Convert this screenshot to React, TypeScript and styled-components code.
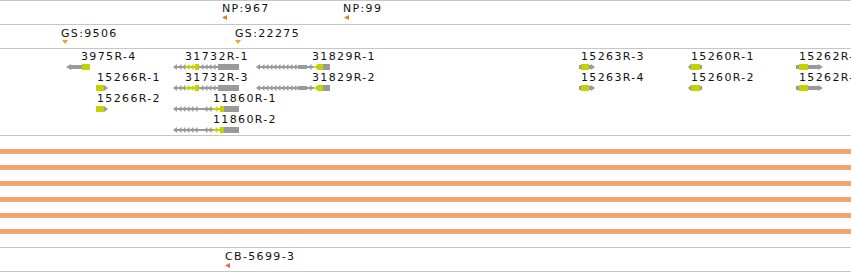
import React from "react";
import styled, { createGlobalStyle } from "styled-components";

const GRAY = "#9a9a9a";
const YEL = "#c4d200";

const GlobalStyle = createGlobalStyle`
  html, body {
    margin: 0;
    padding: 0;
    background: #fff;
    overflow: hidden;
  }
  body {
    font-family: "DejaVu Sans", Verdana, sans-serif;
  }
`;

const Browser = styled.div`
  width: 851px;
  border-top: 1px solid #c6c6c6;
`;

const Track = styled.div<{ $h: number }>`
  position: relative;
  height: ${(p) => p.$h}px;
  border-bottom: 1px solid #c6c6c6;
  overflow: hidden;
`;

// features sit at their genomic coordinate, so they are placed on the track canvas
const Label = styled.span<{ $x: number; $y: number }>`
  position: absolute;
  left: ${(p) => p.$x}px;
  top: ${(p) => p.$y}px;
  font-family: "DejaVu Sans", Verdana, sans-serif;
  font-size: 11px;
  line-height: 13px;
  letter-spacing: 1.35px;
  color: #111;
  white-space: nowrap;
`;

const Art = styled.svg`
  position: absolute;
  left: 0;
  top: 0;
  width: 851px;
  height: 100%;
`;

const BandStack = styled.div`
  display: flex;
  flex-direction: column;
  gap: 11px;
  padding-top: 13px;
`;

const Band = styled.div`
  height: 5px;
  background: #f2a470;
`;

type Part = [kind: "box" | "utr" | "line" | "tipL" | "tipR" | "intron", a: number, b: number, color: string];

const Gene = ({ parts, cy, dir }: { parts: Part[]; cy: number; dir: -1 | 1 }) => (
  <g>
    {parts.map(([kind, a, b, c], i) => {
      if (kind === "box") return <rect key={i} x={a} y={cy - 3} width={b - a} height={6} fill={c} />;
      if (kind === "utr") return <rect key={i} x={a} y={cy - 2} width={b - a} height={4} fill={c} />;
      if (kind === "line") return <rect key={i} x={a} y={cy - 1} width={b - a} height={2} fill={c} />;
      if (kind === "tipL")
        return <polygon key={i} points={`${a},${cy} ${b},${cy - 3} ${b},${cy + 3}`} fill={c} />;
      if (kind === "tipR")
        return <polygon key={i} points={`${b},${cy} ${a},${cy - 3} ${a},${cy + 3}`} fill={c} />;
      const marks = [];
      for (let x = a + 1; x + 3 <= b; x += 4) {
        marks.push(
          dir < 0 ? (
            <polygon key={x} points={`${x},${cy} ${x + 3.5},${cy - 3} ${x + 3.5},${cy + 3}`} fill={c} />
          ) : (
            <polygon key={x} points={`${x + 3.5},${cy} ${x},${cy - 3} ${x},${cy + 3}`} fill={c} />
          )
        );
      }
      return (
        <g key={i}>
          <rect x={a} y={cy - 1} width={b - a} height={2} fill={c} />
          {marks}
        </g>
      );
    })}
  </g>
);

const g3975: Part[] = [
  ["tipL", 66, 71, GRAY],
  ["utr", 71, 82, GRAY],
  ["box", 82, 90, YEL],
];
const g15266: Part[] = [
  ["box", 96, 104, YEL],
  ["tipR", 104, 108, GRAY],
];
const g31732: Part[] = [
  ["tipL", 173, 177, GRAY],
  ["intron", 177, 185, GRAY],
  ["intron", 185, 195, YEL],
  ["box", 195, 199, YEL],
  ["intron", 199, 218, GRAY],
  ["box", 218, 239, GRAY],
];
const g11860: Part[] = [
  ["tipL", 173, 177, GRAY],
  ["intron", 177, 197, GRAY],
  ["line", 197, 203, GRAY],
  ["intron", 203, 213, GRAY],
  ["intron", 213, 220, YEL],
  ["box", 220, 224, YEL],
  ["box", 224, 239, GRAY],
];
const g31829: Part[] = [
  ["tipL", 256, 260, GRAY],
  ["intron", 260, 298, GRAY],
  ["utr", 298, 307, GRAY],
  ["intron", 307, 314, GRAY],
  ["tipL", 314, 318, YEL],
  ["box", 318, 323, YEL],
  ["box", 323, 330, GRAY],
];
const g15263: Part[] = [
  ["utr", 579, 581, GRAY],
  ["box", 581, 589, YEL],
  ["utr", 589, 591, GRAY],
  ["tipR", 591, 595, GRAY],
];
const g15260: Part[] = [
  ["tipL", 688, 691, GRAY],
  ["box", 691, 700, YEL],
  ["utr", 700, 702, GRAY],
];
const g15262: Part[] = [
  ["utr", 796, 799, GRAY],
  ["box", 799, 808, YEL],
  ["utr", 808, 818, GRAY],
  ["tipR", 818, 823, GRAY],
];

const rowLabel = [1, 22, 43, 64];
const rowBar = [18, 39, 60, 81];

const genes: { name: string; x: number; row: number; parts: Part[]; dir: -1 | 1 }[] = [
  { name: "3975R-4", x: 81, row: 0, parts: g3975, dir: -1 },
  { name: "31732R-1", x: 185, row: 0, parts: g31732, dir: -1 },
  { name: "31829R-1", x: 312, row: 0, parts: g31829, dir: -1 },
  { name: "15263R-3", x: 581, row: 0, parts: g15263, dir: 1 },
  { name: "15260R-1", x: 691, row: 0, parts: g15260, dir: -1 },
  { name: "15262R-1", x: 799, row: 0, parts: g15262, dir: 1 },
  { name: "15266R-1", x: 97, row: 1, parts: g15266, dir: 1 },
  { name: "31732R-3", x: 185, row: 1, parts: g31732, dir: -1 },
  { name: "31829R-2", x: 312, row: 1, parts: g31829, dir: -1 },
  { name: "15263R-4", x: 581, row: 1, parts: g15263, dir: 1 },
  { name: "15260R-2", x: 691, row: 1, parts: g15260, dir: -1 },
  { name: "15262R-2", x: 799, row: 1, parts: g15262, dir: 1 },
  { name: "15266R-2", x: 97, row: 2, parts: g15266, dir: 1 },
  { name: "11860R-1", x: 213, row: 2, parts: g11860, dir: -1 },
  { name: "11860R-2", x: 213, row: 3, parts: g11860, dir: -1 },
];

const leftMark = (x: number, y: number) => `${x},${y + 2.5} ${x + 5},${y} ${x + 5},${y + 5}`;
const downMark = (x: number, y: number) => `${x},${y} ${x + 6},${y} ${x + 3},${y + 4}`;

export default function App() {
  return (
    <>
      <GlobalStyle />
      <Browser>
        <Track $h={23}>
          <Art>
            <polygon points={leftMark(222, 14)} fill="#cc8a10" />
            <polygon points={leftMark(344, 14)} fill="#cc8a10" />
          </Art>
          <Label $x={222} $y={1}>NP:967</Label>
          <Label $x={343} $y={1}>NP:99</Label>
        </Track>

        <Track $h={23}>
          <Art>
            <polygon points={downMark(62, 15)} fill="#f5a21e" />
            <polygon points={downMark(235, 15)} fill="#f5a21e" />
          </Art>
          <Label $x={61} $y={2}>GS:9506</Label>
          <Label $x={235} $y={2}>GS:22275</Label>
        </Track>

        <Track $h={86}>
          <Art>
            {genes.map((g) => (
              <Gene key={g.name} parts={g.parts} cy={rowBar[g.row]} dir={g.dir} />
            ))}
          </Art>
          {genes.map((g) => (
            <Label key={g.name} $x={g.x} $y={rowLabel[g.row]}>
              {g.name}
            </Label>
          ))}
        </Track>

        <Track $h={111}>
          <BandStack>
            {[0, 1, 2, 3, 4, 5].map((i) => (
              <Band key={i} />
            ))}
          </BandStack>
        </Track>

        <Track $h={23}>
          <Art>
            <polygon points={leftMark(225, 15)} fill="#ef6447" />
          </Art>
          <Label $x={225} $y={2}>CB-5699-3</Label>
        </Track>
      </Browser>
    </>
  );
}
